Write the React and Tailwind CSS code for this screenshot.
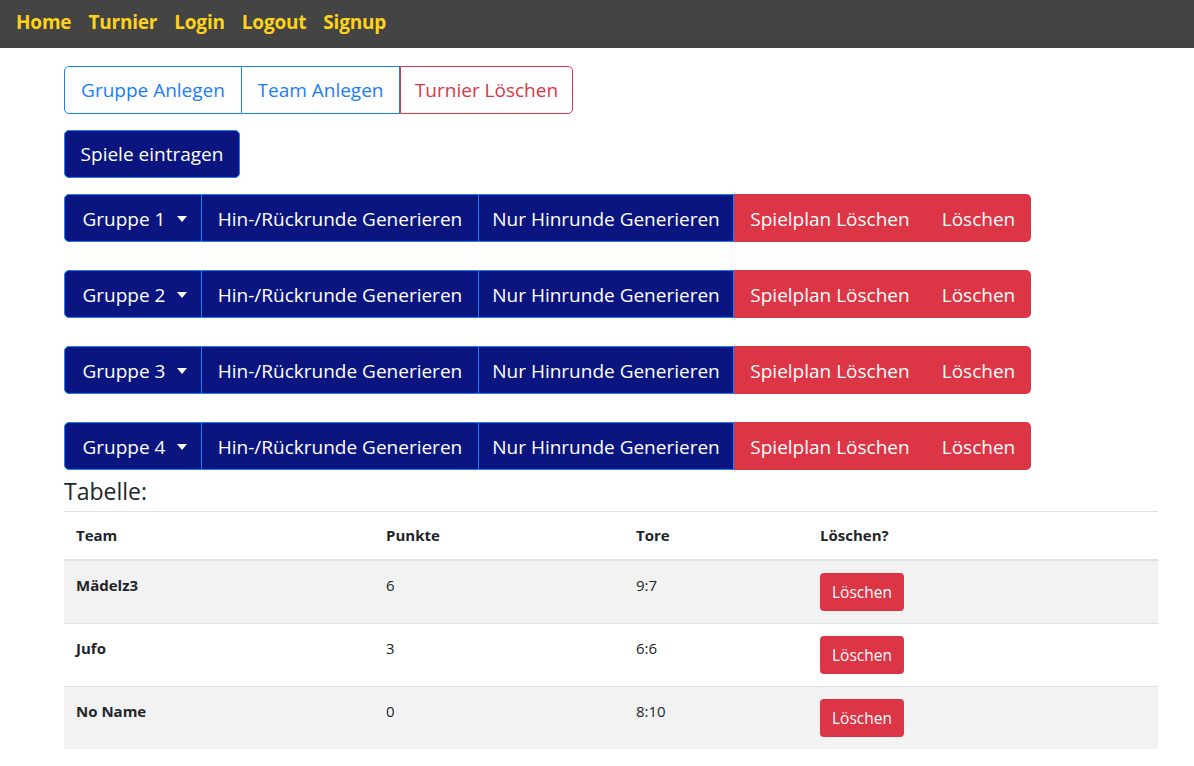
import React from 'react';

const NAV = ['Home', 'Turnier', 'Login', 'Logout', 'Signup'];
const GROUPS = ['Gruppe 1', 'Gruppe 2', 'Gruppe 3', 'Gruppe 4'];
const ROWS = [
  { team: 'Mädelz3', punkte: '6', tore: '9:7' },
  { team: 'Jufo', punkte: '3', tore: '6:6' },
  { team: 'No Name', punkte: '0', tore: '8:10' },
];

function GroupBar({ name }) {
  return (
    <div className="flex h-12 text-[19px] leading-[30px] text-white">
      <button className="flex w-[138px] items-center justify-center gap-3 rounded-l-[5px] border border-[#1a7cff] bg-[#0b1580] pl-1 pt-[2px]">
        {name}
        <span className="h-0 w-0 border-x-[5.5px] border-t-[6px] border-x-transparent border-t-white" />
      </button>
      <button className="w-[277px] border border-l-0 border-[#1a7cff] bg-[#0b1580] pt-[2px]">Hin-/Rückrunde Generieren</button>
      <button className="w-[255px] border border-l-0 border-[#1a7cff] bg-[#0b1580] pt-[2px]">Nur Hinrunde Generieren</button>
      <button className="w-[192px] bg-[#dc3545] pt-[2px]">Spielplan Löschen</button>
      <button className="w-[105px] rounded-r-[5px] bg-[#dc3545] pt-[2px]">Löschen</button>
    </div>
  );
}

export default function App() {
  return (
    <div className="min-h-[766px] bg-white font-['Segoe_UI','Open_Sans',sans-serif] text-[#212529]">
      <nav className="flex h-12 items-center gap-[17px] bg-[#444444] px-4 pb-1">
        {NAV.map((n) => (
          <a key={n} className="text-[19px] font-bold tracking-[-0.2px] text-[#ffd31a]">{n}</a>
        ))}
      </nav>

      <div className="ml-16 w-[1094px] pt-[18px]">
        <div className="flex h-12 text-[19px]">
          <button className="w-[178px] rounded-l-[5px] border border-[#1a7cff] text-[#1a7cff]">Gruppe Anlegen</button>
          <button className="w-[158px] border border-l-0 border-[#1a7cff] text-[#1a7cff]">Team Anlegen</button>
          <button className="w-[173px] rounded-r-[5px] border border-[#dc3545] text-[#dc3545]">Turnier Löschen</button>
        </div>

        <button className="mt-4 h-12 w-[176px] rounded-[5px] border border-[#1a7cff] bg-[#0b1580] text-[19px] text-white">
          Spiele eintragen
        </button>

        <div className="mt-4 flex flex-col gap-7">
          {GROUPS.map((g) => (
            <GroupBar key={g} name={g} />
          ))}
        </div>

        <h4 className="mt-[2px] text-[23px] leading-[39px]">Tabelle:</h4>

        <table className="w-full border-collapse text-[15px]">
          <thead>
            <tr className="border-t border-b-2 border-[#dee2e6] text-left">
              <th className="h-[48px] w-[310px] px-3 font-bold">Team</th>
              <th className="w-[250px] px-3 font-bold">Punkte</th>
              <th className="w-[184px] px-3 font-bold">Tore</th>
              <th className="px-3 font-bold">Löschen?</th>
            </tr>
          </thead>
          <tbody>
            {ROWS.map((r, i) => (
              <tr key={r.team} className={`border-t border-[#dee2e6] align-top ${i % 2 === 0 ? 'bg-[#f2f2f2]' : 'bg-white'}`}>
                <td className="px-3 pt-[12px] font-bold leading-[24px]">{r.team}</td>
                <td className="px-3 pt-[12px] leading-[24px]">{r.punkte}</td>
                <td className="px-3 pt-[12px] leading-[24px]">{r.tore}</td>
                <td className="px-3 py-[12px]">
                  <button className="h-[38px] w-[84px] rounded-[4px] bg-[#dc3545] pt-[2px] text-[15.5px] text-white">Löschen</button>
                </td>
              </tr>
            ))}
          </tbody>
        </table>
      </div>
    </div>
  );
}
